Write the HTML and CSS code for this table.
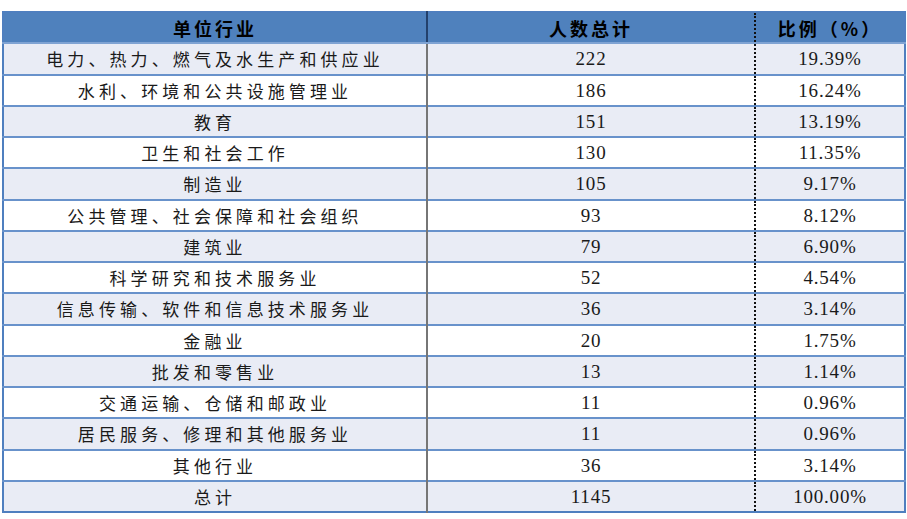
FILE: index.html
```html
<!DOCTYPE html>
<html lang="zh">
<head>
<meta charset="utf-8">
<title>单位行业统计</title>
<link rel="stylesheet" href="styles.css">
</head>
<body>
<table class="stats">
  <colgroup>
    <col class="c1"><col class="c2"><col class="c3">
  </colgroup>
  <thead>
    <tr><th class="col-a">单位行业</th><th class="col-b">人数总计</th><th class="col-c">比例（%）</th></tr>
  </thead>
  <tbody>
    <tr class="shade"><td class="col-a">电力、热力、燃气及水生产和供应业</td><td class="col-b num">222</td><td class="col-c num">19.39%</td></tr>
    <tr><td class="col-a">水利、环境和公共设施管理业</td><td class="col-b num">186</td><td class="col-c num">16.24%</td></tr>
    <tr class="shade"><td class="col-a">教育</td><td class="col-b num">151</td><td class="col-c num">13.19%</td></tr>
    <tr><td class="col-a">卫生和社会工作</td><td class="col-b num">130</td><td class="col-c num">11.35%</td></tr>
    <tr class="shade"><td class="col-a">制造业</td><td class="col-b num">105</td><td class="col-c num">9.17%</td></tr>
    <tr><td class="col-a">公共管理、社会保障和社会组织</td><td class="col-b num">93</td><td class="col-c num">8.12%</td></tr>
    <tr class="shade"><td class="col-a">建筑业</td><td class="col-b num">79</td><td class="col-c num">6.90%</td></tr>
    <tr><td class="col-a">科学研究和技术服务业</td><td class="col-b num">52</td><td class="col-c num">4.54%</td></tr>
    <tr class="shade"><td class="col-a">信息传输、软件和信息技术服务业</td><td class="col-b num">36</td><td class="col-c num">3.14%</td></tr>
    <tr><td class="col-a">金融业</td><td class="col-b num">20</td><td class="col-c num">1.75%</td></tr>
    <tr class="shade"><td class="col-a">批发和零售业</td><td class="col-b num">13</td><td class="col-c num">1.14%</td></tr>
    <tr><td class="col-a">交通运输、仓储和邮政业</td><td class="col-b num">11</td><td class="col-c num">0.96%</td></tr>
    <tr class="shade"><td class="col-a">居民服务、修理和其他服务业</td><td class="col-b num">11</td><td class="col-c num">0.96%</td></tr>
    <tr><td class="col-a">其他行业</td><td class="col-b num">36</td><td class="col-c num">3.14%</td></tr>
    <tr class="shade"><td class="col-a">总计</td><td class="col-b num">1145</td><td class="col-c num">100.00%</td></tr>
  </tbody>
</table>
</body>
</html>
```

FILE: styles.css
```css
html, body {
  margin: 0;
  padding: 0;
  background: #ffffff;
}

body {
  padding: 11px 0 0 2px;
}

.stats {
  border-collapse: collapse;
  table-layout: fixed;
  width: 902px;
  border: 2px solid #4f7fbf;
  font-family: "Noto Sans CJK SC", "Liberation Sans", sans-serif;
  color: #111;
}

.c1 { width: 424px; }
.c2 { width: 328px; }
.c3 { width: 150px; }

.stats th,
.stats td {
  height: 29.25px;
  padding: 0;
  text-align: center;
  vertical-align: middle;
  line-height: 1;
}

.stats th {
  background: #4f81bd;
  font-size: 18px;
  font-weight: 700;
  letter-spacing: 3px;
  color: #000;
  border-bottom: 2px solid #7fa3d3;
}

.stats td {
  font-size: 17px;
  font-weight: 400;
  letter-spacing: 4.1px;
  color: #1a1a1a;
  border-top: 2px solid #6892cb;
}

.stats tr.shade td {
  background: #e9ecf5;
}

.stats th.col-b {
  border-left: 2px solid #23406b;
}

.stats td.col-b {
  border-left: 2px solid #767676;
}

.stats th.col-c,
.stats td.col-c {
  border-left: 2px dotted #111;
}

.stats td.num {
  font-family: "Liberation Serif", "DejaVu Serif", serif;
  font-size: 19px;
  letter-spacing: 0.8px;
}
```
